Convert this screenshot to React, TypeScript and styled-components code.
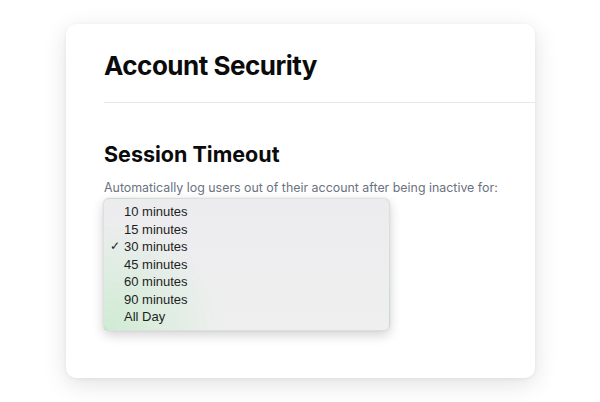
import React from 'react';
import styled, { createGlobalStyle } from 'styled-components';

const GlobalStyle = createGlobalStyle`
  html, body {
    margin: 0;
    padding: 0;
    background: #ffffff;
  }
  body {
    font-family: "Inter", "Liberation Sans", sans-serif;
    -webkit-font-smoothing: antialiased;
  }
`;

const Page = styled.div`
  width: 600px;
  height: 402px;
  padding: 24px 0 0 66px;
  box-sizing: border-box;
`;

const Card = styled.section`
  width: 469px;
  height: 354px;
  box-sizing: border-box;
  background: #ffffff;
  border-radius: 10px;
  box-shadow: 0 6px 24px rgba(0, 0, 0, 0.12), 0 1px 4px rgba(0, 0, 0, 0.05);
  padding-top: 26px;
`;

const Header = styled.header`
  margin-left: 38px;
  padding-bottom: 20px;
  border-bottom: 1px solid #e5e8ec;
`;

const Title = styled.h1`
  margin: 0;
  font-size: 26px;
  line-height: 32px;
  font-weight: 700;
  color: #0b0b0c;
  letter-spacing: -0.5px;
`;

const Body = styled.div`
  padding: 38px 0 0 38px;
`;

const SectionTitle = styled.h2`
  margin: 0;
  font-size: 21.5px;
  line-height: 26px;
  font-weight: 700;
  color: #0b0b0c;
  letter-spacing: 0;
`;

const Hint = styled.p`
  margin: 12px 0 0;
  font-size: 12.4px;
  line-height: 17px;
  color: #6b7280;
`;

const Menu = styled.ul`
  list-style: none;
  margin: 2px 0 0 -1px;
  padding: 4px 0;
  width: 287px;
  box-sizing: border-box;
  border-radius: 6px;
  border: 1px solid rgba(0, 0, 0, 0.06);
  background:
    radial-gradient(ellipse 120px 110px at 0% 100%, rgba(200, 235, 205, 0.85), rgba(200, 235, 205, 0) 100%),
    linear-gradient(180deg, #ececee, #efeff0);
  box-shadow: 0 4px 12px rgba(0, 0, 0, 0.18), 0 0 1px rgba(0, 0, 0, 0.2);
  font-family: "Liberation Sans", "Helvetica", sans-serif;
`;

const Item = styled.li<{ $checked?: boolean }>`
  position: relative;
  padding-left: 20px;
  font-size: 13px;
  line-height: 17.5px;
  color: #1e1e1e;

  &::before {
    content: ${(p) => (p.$checked ? '"✓"' : '""')};
    position: absolute;
    left: 6px;
    top: 0;
    font-size: 12px;
    color: #1e1e1e;
  }
`;

const options = [
  '10 minutes',
  '15 minutes',
  '30 minutes',
  '45 minutes',
  '60 minutes',
  '90 minutes',
  'All Day',
];

export default function App() {
  return (
    <>
      <GlobalStyle />
      <Page>
        <Card>
          <Header>
            <Title>Account Security</Title>
          </Header>
          <Body>
            <SectionTitle>Session Timeout</SectionTitle>
            <Hint>Automatically log users out of their account after being inactive for:</Hint>
            <Menu>
              {options.map((o) => (
                <Item key={o} $checked={o === '30 minutes'}>
                  {o}
                </Item>
              ))}
            </Menu>
          </Body>
        </Card>
      </Page>
    </>
  );
}
